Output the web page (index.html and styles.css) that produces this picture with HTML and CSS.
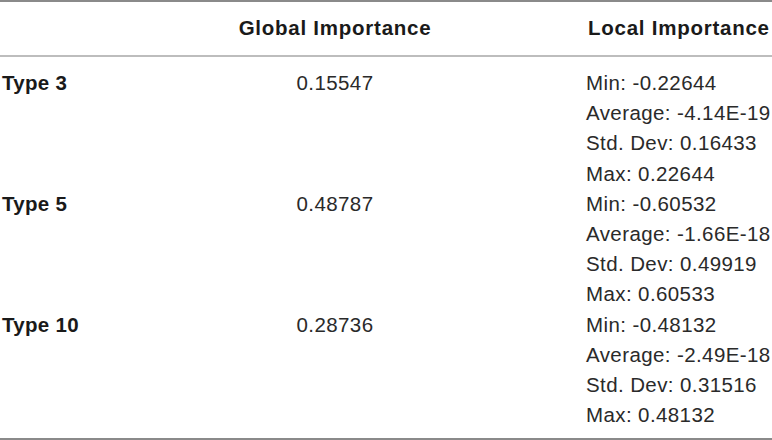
FILE: index.html
```html
<!DOCTYPE html>
<html>
<head>
<meta charset="utf-8">
<link rel="stylesheet" href="styles.css">
</head>
<body>
<div class="table">
  <div class="row head">
    <div class="c1"></div>
    <div class="c2">Global Importance</div>
    <div class="c3">Local Importance</div>
  </div>
  <div class="body">
    <div class="row">
      <div class="c1 name">Type 3</div>
      <div class="c2">0.15547</div>
      <div class="c3">
        <div>Min: -0.22644</div>
        <div>Average: -4.14E-19</div>
        <div>Std. Dev: 0.16433</div>
        <div>Max: 0.22644</div>
      </div>
    </div>
    <div class="row">
      <div class="c1 name">Type 5</div>
      <div class="c2">0.48787</div>
      <div class="c3">
        <div>Min: -0.60532</div>
        <div>Average: -1.66E-18</div>
        <div>Std. Dev: 0.49919</div>
        <div>Max: 0.60533</div>
      </div>
    </div>
    <div class="row">
      <div class="c1 name">Type 10</div>
      <div class="c2">0.28736</div>
      <div class="c3">
        <div>Min: -0.48132</div>
        <div>Average: -2.49E-18</div>
        <div>Std. Dev: 0.31516</div>
        <div>Max: 0.48132</div>
      </div>
    </div>
  </div>
</div>
</body>
</html>
```

FILE: styles.css
```css
html, body {
  margin: 0;
  padding: 0;
  background: #fff;
}
body {
  width: 772px;
  height: 440px;
  overflow: hidden;
  font-family: "Liberation Sans", Arial, sans-serif;
  color: #2a2a2a;
}
.table {
  border-top: 2px solid #8a8a8a;
  border-bottom: 2px solid #8a8a8a;
  height: 440px;
  box-sizing: border-box;
  display: flex;
  flex-direction: column;
}
.row {
  display: grid;
  grid-template-columns: 180px 306px 1fr;
  padding-left: 2px;
  font-size: 20.5px;
  line-height: 30.2px;
  letter-spacing: 0.4px;
}
.head {
  height: 53px;
  align-items: center;
  border-bottom: 2px solid #bdbdbd;
  font-weight: bold;
  letter-spacing: 0.75px;
  color: #1a1a1a;
}
.body {
  padding-top: 11px;
}
.c2 {
  text-align: center;
}
.c3 {
  padding-left: 98px;
  white-space: nowrap;
}
.head .c3 {
  padding-left: 100px;
}
.name {
  font-weight: bold;
  letter-spacing: 0.3px;
  color: #1a1a1a;
}
```
